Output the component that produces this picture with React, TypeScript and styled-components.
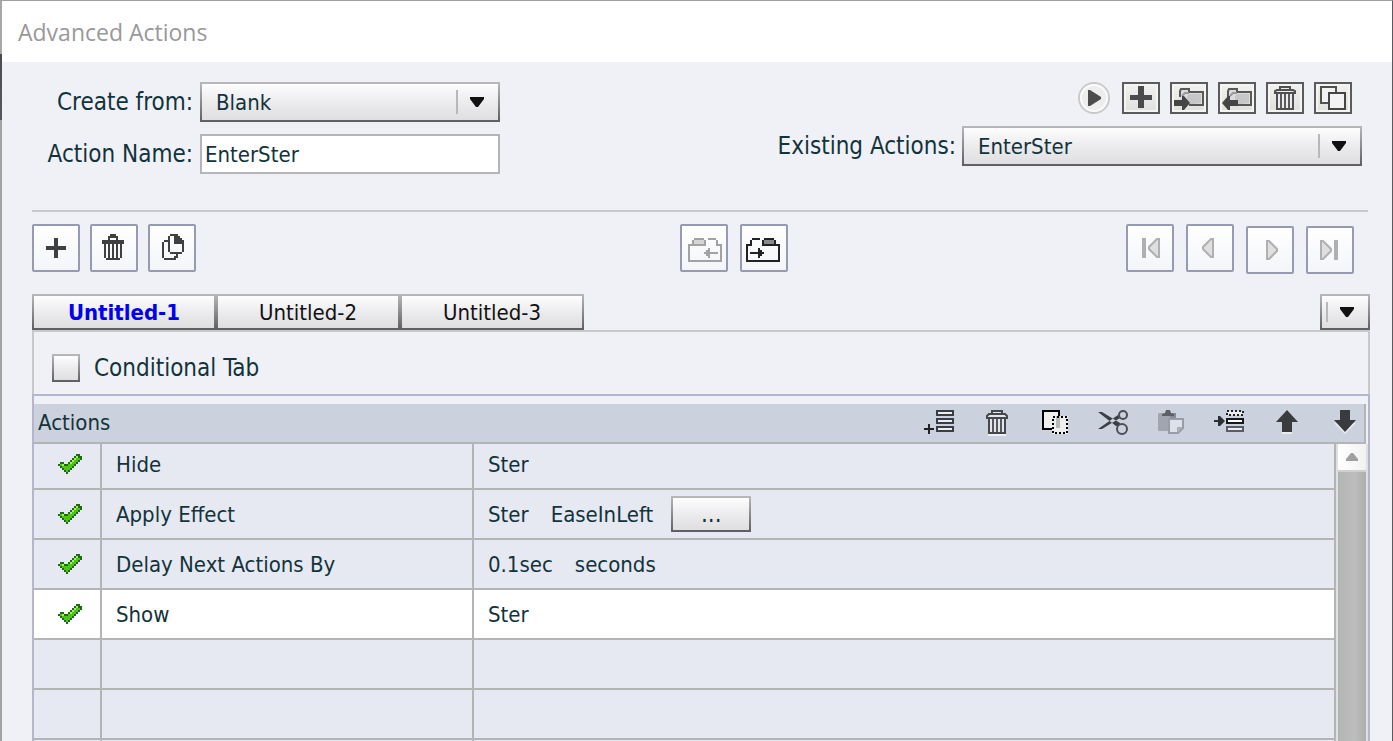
import React from "react";
import styled, { createGlobalStyle, css } from "styled-components";

const uiFont = `"DejaVu Sans Condensed", "Noto Sans", sans-serif`;
const titleFont = `"Open Sans", "Noto Sans", sans-serif`;
const ink = "#12333b";
const raisedEdge = "linear-gradient(#b9b9bb, #5e5e62)";

const GlobalStyle = createGlobalStyle`
  * { box-sizing: border-box; }
  body { margin: 0; background: #f0f1f7; }
  button, input, select { font: inherit; color: inherit; margin: 0; padding: 0; }
  svg { display: block; }
`;

const raised = css`
  border: 2px solid transparent;
  background: linear-gradient(#fdfdfe, #ececee 50%, #dfdfe1) padding-box, ${raisedEdge} border-box;
`;

const Dialog = styled.main`
  display: flex;
  flex-direction: column;
  height: 100vh;
  min-height: 520px;
  overflow: hidden;
  padding-left: 2px;
  border-top: 1px solid #a0a0a0;
  border-right: 1px solid #5a5a5e;
  background: linear-gradient(#a6a6aa 53px, #4c4c50 53px, #58585c 119px, #a3a3a3 119px);
  font: 22px/28px ${uiFont};
  color: ${ink};
`;

const TitleBar = styled.header`
  flex: none;
  display: flex;
  align-items: center;
  height: 61px;
  padding: 0 16px 0;
  background: #fff;
`;

const Title = styled.h1`
  margin: 0;
  font: 400 23px/32px ${titleFont};
  color: #999;
`;

const Body = styled.div`
  flex: 1;
  min-height: 0;
  display: flex;
  flex-direction: column;
  padding: 20px 22px 0 30px;
  background: #f0f1f7;
`;

const FormHeader = styled.div`
  display: flex;
  justify-content: space-between;
  margin-right: 8px;
  padding-bottom: 36px;
`;

const FieldGrid = styled.div`
  display: grid;
  grid-template-columns: 161px 300px;
  column-gap: 7px;
  row-gap: 12px;
  align-items: center;
`;

const FieldLabel = styled.label`
  font-size: 24px;
  text-align: right;
  white-space: nowrap;
`;

const SelectBox = styled.div<{ $width: number }>`
  display: grid;
  grid-template-columns: 1fr 42px;
  width: ${(p) => p.$width}px;
  height: 40px;
  ${raised}
`;

const SelectControl = styled.select`
  grid-area: 1 / 1 / 2 / 3;
  appearance: none;
  border: 0;
  outline: 0;
  background: transparent;
  padding: 2px 0 0 14px;
`;

const SelectArrow = styled.span`
  grid-area: 1 / 2 / 2 / 3;
  display: flex;
  align-items: center;
  align-self: center;
  height: 24px;
  padding-left: 12px;
  border-left: 2px solid #b8b8bc;
  pointer-events: none;
`;

const TextInput = styled.input`
  width: 300px;
  height: 40px;
  border: 2px solid #b5b5b9;
  background: #fff;
  padding: 0 3px;
  outline: 0;
`;

const Existing = styled.div`
  display: flex;
  flex-direction: column;
  align-items: flex-end;
  gap: 12px;
`;

const IconBar = styled.div`
  display: flex;
  gap: 10px;
  padding-right: 10px;
`;

const PlayButton = styled.button`
  width: 32px;
  height: 32px;
  margin-right: 2px;
  border: 0;
  background: none;
`;

const SmallButton = styled.button`
  width: 38px;
  height: 32px;
  border: 2px solid #5b5b5b;
  background: linear-gradient(#f0f0f0, #e0e0e1);
  box-shadow: inset 0 0 0 2px #f4f4f1;
`;

const ExistingField = styled.div`
  display: flex;
  align-items: center;
  gap: 6px;
`;

const Divider = styled.hr`
  flex: none;
  width: auto;
  height: 2px;
  margin: 0 2px 12px 0;
  border: 0;
  background: #c6cbca;
`;

const Toolbar = styled.div`
  display: grid;
  grid-template-columns: 648px auto 1fr;
  align-items: start;
  margin-right: 16px;
`;

const ToolGroup = styled.div<{ $gap: number; $end?: boolean }>`
  display: flex;
  gap: ${(p) => p.$gap}px;
  justify-content: ${(p) => (p.$end ? "flex-end" : "flex-start")};
`;

const ToolButton = styled.button<{ $low?: boolean }>`
  width: 48px;
  height: 48px;
  margin-top: ${(p) => (p.$low ? 2 : 0)}px;
  border: 2px solid #969bb3;
  border-radius: 2px;
  background: linear-gradient(#fff, #f3f5f9);
`;

const TabRow = styled.div`
  display: flex;
  justify-content: space-between;
  margin-top: 20px;
`;

const TabList = styled.div`
  display: flex;
`;

const Tab = styled.button<{ $active?: boolean }>`
  width: 184px;
  height: 36px;
  padding-top: 2px;
  ${raised}
  font-weight: ${(p) => (p.$active ? 700 : 400)};
  color: ${(p) => (p.$active ? "#0000f0" : "#111")};
`;

const TabMenuButton = styled.button`
  display: flex;
  align-items: center;
  width: 50px;
  height: 36px;
  ${raised}
`;

const TabMenuArrow = styled.span`
  display: flex;
  align-items: center;
  height: 20px;
  margin-left: 4px;
  padding-left: 12px;
  border-left: 2px solid #b8b8bc;
`;

const ConditionalRow = styled.div`
  flex: none;
  display: flex;
  align-items: center;
  gap: 14px;
  height: 64px;
  padding: 10px 18px 0;
  border: 2px solid #c6cbca;
  border-bottom: 0;
`;

const CheckBox = styled.input`
  appearance: none;
  width: 28px;
  height: 28px;
  ${raised}
`;

const CheckLabel = styled.label`
  font-size: 24px;
`;

const ActionsPanel = styled.section`
  flex: 1;
  min-height: 0;
  display: flex;
  flex-direction: column;
  padding-top: 8px;
  border: 2px solid #b3b6cc;
  border-bottom: 0;
`;

const ActionsBar = styled.div`
  flex: none;
  display: flex;
  align-items: center;
  justify-content: space-between;
  height: 40px;
  margin-right: 2px;
  padding: 0 2px 0 4px;
  border-right: 2px solid #b3b5b5;
  border-bottom: 2px solid #b3b5b5;
  background: #cbd1dd;
`;

const ActionsTitle = styled.h2`
  margin: 0;
  font-size: 22px;
  font-weight: 400;
`;

const ActionTools = styled.div`
  display: flex;
  gap: 26px;
`;

const ActionTool = styled.button`
  width: 32px;
  height: 26px;
  border: 0;
  background: none;
`;

const TableArea = styled.div`
  flex: 1;
  min-height: 0;
  display: flex;
  overflow: hidden;
`;

const Table = styled.table`
  flex: 1;
  align-self: flex-start;
  table-layout: fixed;
  border-collapse: separate;
  border-spacing: 0;
`;

const Row = styled.tr<{ $selected?: boolean }>`
  height: 50px;
  background: ${(p) => (p.$selected ? "#fff" : "#e6e9f1")};
  &:first-child { height: 46px; }
  &:first-child td { padding-bottom: 4px; }
`;

const Cell = styled.td<{ $inset: number }>`
  padding: 0 0 0 ${(p) => p.$inset}px;
  border-right: 2px solid #b3b5b5;
  border-bottom: 2px solid #b3b5b5;
  white-space: nowrap;
`;

const CellContent = styled.div`
  display: flex;
  align-items: center;
  gap: 18px;
`;

const Params = styled.span`
  display: flex;
  gap: 22px;
  padding-top: 2px;
`;

const MoreButton = styled.button`
  width: 80px;
  height: 36px;
  ${raised}
  font-size: 24px;
`;

const ScrollBar = styled.div`
  flex: none;
  width: 32px;
  padding: 0 2px;
  background: linear-gradient(90deg, #b3b5b5, #bdbdbd 60%, #aeaeae) content-box, #dfe0e4;
`;

const ScrollUp = styled.button`
  display: grid;
  place-items: center;
  width: 28px;
  height: 28px;
  border: 0;
  border-bottom: 2px solid #cfcfcd;
  background: linear-gradient(90deg, #fff, #f2f2f2);
`;

const DownArrow = () => (
  <svg width="14" height="10" viewBox="0 0 14 10" fill="#111" aria-hidden="true">
    <path d="M0 0h14v2L8 10H6L0 2z" />
  </svg>
);

const Small = ({ children }: { children: React.ReactNode }) => (
  <svg width="34" height="28" viewBox="0 0 34 28" aria-hidden="true">
    {children}
  </svg>
);

const Tool = ({ children }: { children: React.ReactNode }) => (
  <svg width="44" height="44" viewBox="0 0 44 44" shapeRendering="crispEdges" aria-hidden="true">
    {children}
  </svg>
);

const Mini = ({ children }: { children: React.ReactNode }) => (
  <svg width="32" height="26" viewBox="0 0 32 26" aria-hidden="true">
    {children}
  </svg>
);

const FolderShape = () => (
  <>
    <path d="M8 15V7l2-2h7v3h14v13H12z" fill="#dcdcdc" />
    <path d="M15 21V12l2-2h12v9z" fill="#c6c6c6" />
    <path d="M8 13V7l1-2h8v3h14v13H17" fill="none" stroke="#585858" strokeWidth="2" />
    <path d="M10 12l3-3h4" fill="none" stroke="#9a9a9a" strokeWidth="2" />
  </>
);

const TickIcon = () => (
  <svg width="24" height="20" viewBox="0 0 24 20" shapeRendering="crispEdges" role="img" aria-label="Enabled">
    <path
      fill="#1c6b12"
      d="M18 0h4v2h2v4h-2v2h-2v2h-2v2h-2v2h-2v2h-2v2h-2v2H8v-2H6v-2H4v-2H2v-2H0v-2h2V8h4v2h4V8h2V6h2V4h2V2h2z"
    />
    <path fill="#4fc414" d="M18 2h2v2h2v2h-2v2h-2v2h-2v2h-2v2h-2v2h-2v2H8v-2H6v-2H4v-2H2v-2h4v2h4v-2h2V8h2V6h2V4h2z" />
    <path fill="#a4ee6c" d="M18 2h2v2h-2v2h-2v2h-2v2h-2V8h2V6h2V4h2zM4 10h2v2H4z" />
  </svg>
);

const NavIcon = ({ bar, x, left }: { bar?: number; x: number; left?: boolean }) => (
  <svg width="44" height="44" viewBox="0 0 44 44" aria-hidden="true">
    {bar !== undefined && <rect x={bar} y="12" width="4" height="20" fill="#b0b0b0" />}
    <path
      d={left ? `M${x + 11} 13v18h-2l-8-8v-2l8-8z` : `M${x + 1} 13v18h2l8-8v-2l-8-8z`}
      fill="#dfdfdf"
      stroke="#b0b0b0"
      strokeWidth="2"
    />
  </svg>
);

type ActionRow = { name: string; params: string[]; more?: boolean; selected?: boolean };

const rows: ActionRow[] = [
  { name: "Hide", params: ["Ster"] },
  { name: "Apply Effect", params: ["Ster", "EaseInLeft"], more: true },
  { name: "Delay Next Actions By", params: ["0.1sec", "seconds"] },
  { name: "Show", params: ["Ster"], selected: true },
  { name: "", params: [] },
  { name: "", params: [] },
  { name: "", params: [] },
  { name: "", params: [] },
];

export default function App() {
  return (
    <>
      <GlobalStyle />
      <Dialog>
        <TitleBar>
          <Title>Advanced Actions</Title>
        </TitleBar>
        <Body>
          <FormHeader>
            <FieldGrid>
              <FieldLabel htmlFor="create-from">Create from:</FieldLabel>
              <SelectBox $width={300}>
                <SelectControl id="create-from" defaultValue="Blank">
                  <option>Blank</option>
                </SelectControl>
                <SelectArrow><DownArrow /></SelectArrow>
              </SelectBox>
              <FieldLabel htmlFor="action-name">Action Name:</FieldLabel>
              <TextInput id="action-name" type="text" defaultValue="EnterSter" spellCheck={false} />
            </FieldGrid>
            <Existing>
              <IconBar>
                <PlayButton aria-label="Preview action">
                  <svg width="32" height="32" viewBox="0 0 32 32" aria-hidden="true">
                    <circle cx="16" cy="16" r="15" fill="#ededed" stroke="#c9c9c9" strokeWidth="2" />
                    <circle cx="16" cy="16" r="13" fill="none" stroke="#fafafa" strokeWidth="2" />
                    <path d="M10 8h2l11 7v2l-11 7h-2z" fill="#4c4c4c" />
                  </svg>
                </PlayButton>
                <SmallButton aria-label="Create new action">
                  <Small><path d="M14 2h6v9h8v5h-8v8h-6v-8H6v-5h8z" fill="#4b4b4b" /></Small>
                </SmallButton>
                <SmallButton aria-label="Import shared action">
                  <Small>
                    <FolderShape />
                    <path d="M2 16h8v-4h2l6 7-6 7h-2v-4H2z" fill="#454545" />
                  </Small>
                </SmallButton>
                <SmallButton aria-label="Export shared action">
                  <Small>
                    <FolderShape />
                    <path d="M18 16h-8v-4H8l-6 7 6 7h2v-4h8z" fill="#454545" />
                  </Small>
                </SmallButton>
                <SmallButton aria-label="Delete action">
                  <Small>
                    <path d="M12 6V3h10v3M9 9v16h16V9" fill="#ececec" stroke="#505050" strokeWidth="2" />
                    <path d="M7 9V7l2-1h16l2 1v2z" fill="#ececec" stroke="#505050" strokeWidth="2" />
                    <path d="M13 10v14M17 10v14M21 10v14" stroke="#5a5a5a" strokeWidth="2" />
                  </Small>
                </SmallButton>
                <SmallButton aria-label="Duplicate action">
                  <Small>
                    <rect x="5" y="3" width="15" height="16" fill="#f2f2f2" stroke="#505050" strokeWidth="2" />
                    <rect x="13" y="9" width="16" height="16" fill="#f2f2f2" stroke="#454545" strokeWidth="2" />
                  </Small>
                </SmallButton>
              </IconBar>
              <ExistingField>
                <FieldLabel htmlFor="existing-actions">Existing Actions:</FieldLabel>
                <SelectBox $width={400}>
                  <SelectControl id="existing-actions" defaultValue="EnterSter">
                    <option>EnterSter</option>
                  </SelectControl>
                  <SelectArrow><DownArrow /></SelectArrow>
                </SelectBox>
              </ExistingField>
            </Existing>
          </FormHeader>
          <Divider />
          <Toolbar>
            <ToolGroup $gap={10}>
              <ToolButton aria-label="Add decision">
                <Tool><path d="M20 12h4v8h8v4h-8v8h-4v-8h-8v-4h8z" fill="#404040" /></Tool>
              </ToolButton>
              <ToolButton aria-label="Delete decision">
                <Tool>
                  <path
                    fill="#404040"
                    fillRule="evenodd"
                    d="M18 8h6v2h2v4h6v4h-2v14h-2v2H14v-2h-2V18h-2v-4h6v-4h2zM18 12v2h6v-2zM14 18v14h2V18zM18 18v14h2V18zM22 18v14h2V18zM26 18v14h2V18z"
                  />
                </Tool>
              </ToolButton>
              <ToolButton aria-label="Duplicate decision">
                <Tool>
                  <path
                    fill="#404040"
                    d="M14 14h4v2h-4v16h10v-2h2v-2h2v4h-2v2H14v-2h-2V16h2zM20 8h8v2h2v2h2v2h2v12h-2v2H20v-2h12V18h-8v-8h-4v16h-2V10h2z"
                  />
                </Tool>
              </ToolButton>
            </ToolGroup>
            <ToolGroup $gap={12}>
              <ToolButton aria-label="Collapse group">
                <Tool>
                  <rect x="12" y="14" width="10" height="6" fill="#d6d6d6" />
                  <path
                    fill="#a2a2a2"
                    d="M12 12h10v2H12zM26 12h8v2h-8zM10 14h2v4h10v-4h2v6H8v14h30V20h-4v-6h2v4h4v18H6V18h4zM22 26h2v-2h2v-2h2v4h8v2h-8v4h-2v-2h-2v-2h-2z"
                  />
                </Tool>
              </ToolButton>
              <ToolButton aria-label="Expand group">
                <Tool>
                  <rect x="22" y="14" width="10" height="6" fill="#8a8a8a" />
                  <path
                    fill="#222"
                    d="M10 12h8v2h-8zM22 12h10v2H22zM8 14h2v6H6v14h30V20H20v-6h2v4h10v-4h2v4h4v18H4V18h4zM22 26h-2v-2h-2v-2h-2v4H8v2h8v4h2v-2h2v-2h2z"
                  />
                </Tool>
              </ToolButton>
            </ToolGroup>
            <ToolGroup $gap={12} $end>
              <ToolButton aria-label="First decision"><NavIcon bar={14} x={20} left /></ToolButton>
              <ToolButton aria-label="Previous decision"><NavIcon x={14} left /></ToolButton>
              <ToolButton aria-label="Next decision" $low><NavIcon x={18} /></ToolButton>
              <ToolButton aria-label="Last decision" $low><NavIcon bar={26} x={12} /></ToolButton>
            </ToolGroup>
          </Toolbar>
          <TabRow>
            <TabList role="tablist">
              <Tab role="tab" aria-selected $active>Untitled-1</Tab>
              <Tab role="tab">Untitled-2</Tab>
              <Tab role="tab">Untitled-3</Tab>
            </TabList>
            <TabMenuButton aria-label="All tabs">
              <TabMenuArrow><DownArrow /></TabMenuArrow>
            </TabMenuButton>
          </TabRow>
          <ConditionalRow>
            <CheckBox id="conditional-tab" type="checkbox" />
            <CheckLabel htmlFor="conditional-tab">Conditional Tab</CheckLabel>
          </ConditionalRow>
          <ActionsPanel>
            <ActionsBar>
              <ActionsTitle>Actions</ActionsTitle>
              <ActionTools>
                <ActionTool aria-label="Add">
                  <Mini>
                    <path d="M0 19h10M5 14v10" stroke="#222" strokeWidth="2" />
                    <path d="M13 1h16v4H13zM13 9h16v4H13zM13 17h16v4H13z" fill="#eceef2" stroke="#3a3d44" strokeWidth="2" />
                  </Mini>
                </ActionTool>
                <ActionTool aria-label="Remove">
                  <Mini>
                    <path d="M6 25h18" stroke="#eef0f4" strokeWidth="2" />
                    <path d="M10 4V1h10v3M7 8v15h16V8" fill="#e4e6ea" stroke="#44474c" strokeWidth="2" />
                    <path d="M5 8V6l2-2h16l2 2v2z" fill="#e4e6ea" stroke="#44474c" strokeWidth="2" />
                    <path d="M11 9v13M15 9v13M19 9v13" stroke="#55585e" strokeWidth="2" />
                  </Mini>
                </ActionTool>
                <ActionTool aria-label="Copy">
                  <Mini>
                    <rect x="3" y="1" width="16" height="18" fill="#eee" stroke="#000" strokeWidth="2" />
                    <rect x="12" y="6" width="16" height="18" fill="#eee" />
                    <path d="M18 6v12" stroke="#b8b8b8" strokeWidth="4" />
                    <rect x="13" y="7" width="14" height="16" fill="none" stroke="#000" strokeWidth="2" strokeDasharray="2 2" />
                  </Mini>
                </ActionTool>
                <ActionTool aria-label="Cut">
                  <Mini>
                    <path d="M0 2h4l18 11v3h-4zM0 19h4L22 8l-2-3z" fill="#3c3f46" />
                    <circle cx="25" cy="5" r="4" fill="#cbd1dd" stroke="#4b4e55" strokeWidth="2" />
                    <circle cx="24" cy="19" r="5" fill="#cbd1dd" stroke="#4b4e55" strokeWidth="2" />
                  </Mini>
                </ActionTool>
                <ActionTool aria-label="Paste">
                  <Mini>
                    <rect x="2" y="3" width="18" height="18" rx="1" fill="#a0a5af" />
                    <path d="M14 3h6v6h-6z" fill="#858a94" />
                    <path d="M6 4l3-1 1-3h4l1 3 3 1v2H6z" fill="#5d6068" />
                    <path d="M13 9h14v9l-5 5h-9z" fill="#dde1ea" stroke="#979ca6" strokeWidth="2" />
                    <path d="M27 17h-6v6z" fill="#a9aeb8" />
                  </Mini>
                </ActionTool>
                <ActionTool aria-label="Insert">
                  <Mini>
                    <path d="M0 10h4V6h2l5 5-5 5H4v-4H0z" fill="#2c2f36" />
                    <rect x="13" y="1" width="16" height="4" fill="#eceef2" stroke="#222" strokeWidth="2" strokeDasharray="2 2" />
                    <path d="M13 9h16v4H13z" fill="#fff" stroke="#16181c" strokeWidth="2" />
                    <path d="M13 17h16v4H13z" fill="#eceef2" stroke="#5a5d64" strokeWidth="2" />
                  </Mini>
                </ActionTool>
                <ActionTool aria-label="Move up">
                  <Mini>
                    <path d="M10 23h10" stroke="#e8ebf1" strokeWidth="2" />
                    <path d="M15 0l11 12h-6v10H10V12H4z" fill="#3a3b3e" />
                  </Mini>
                </ActionTool>
                <ActionTool aria-label="Move down">
                  <Mini>
                    <path d="M15 24L4 13h22z" fill="#e8ebf1" />
                    <path d="M15 22L4 10h6V0h10v10h6z" fill="#3a3b3e" />
                  </Mini>
                </ActionTool>
              </ActionTools>
            </ActionsBar>
            <TableArea>
              <Table aria-label="Actions">
                <colgroup>
                  <col style={{ width: 68 }} />
                  <col style={{ width: 372 }} />
                  <col />
                </colgroup>
                <tbody>
                  {rows.map((row, i) => (
                    <Row key={i} $selected={row.selected}>
                      <Cell $inset={24}>{row.name && <TickIcon />}</Cell>
                      <Cell $inset={14}>
                        <Params>{row.name}</Params>
                      </Cell>
                      <Cell $inset={14}>
                        <CellContent>
                          <Params>
                            {row.params.map((p) => (
                              <span key={p}>{p}</span>
                            ))}
                          </Params>
                          {row.more && <MoreButton aria-label="Effect settings">...</MoreButton>}
                        </CellContent>
                      </Cell>
                    </Row>
                  ))}
                </tbody>
              </Table>
              <ScrollBar>
                <ScrollUp aria-label="Scroll up">
                  <svg width="12" height="8" viewBox="0 0 12 8" aria-hidden="true">
                    <path d="M5 0h2l5 6v2H0V6z" fill="#a0a0a0" />
                  </svg>
                </ScrollUp>
              </ScrollBar>
            </TableArea>
          </ActionsPanel>
        </Body>
      </Dialog>
    </>
  );
}
